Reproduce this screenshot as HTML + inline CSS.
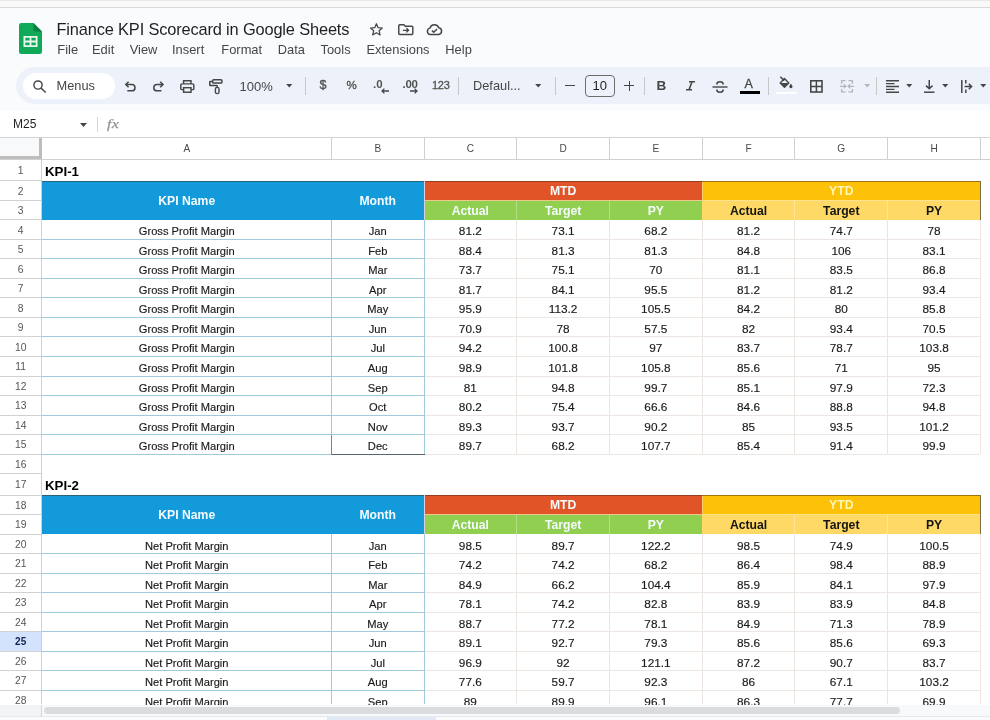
<!DOCTYPE html>
<html>
<head>
<meta charset="utf-8">
<title>Finance KPI Scorecard in Google Sheets</title>
<style>
html,body{margin:0;padding:0;}
body{width:990px;height:720px;overflow:hidden;position:relative;background:#f9fbfd;font-family:"Liberation Sans",sans-serif;color:#1f1f1f;}
#pg{position:absolute;left:0;top:0;width:990px;height:720px;overflow:hidden;will-change:transform;}
#pg div{position:absolute;box-sizing:border-box;white-space:nowrap;}
.ch{font-size:10.1px;color:#4a4a4a;display:flex;align-items:center;justify-content:center;}
.rh{font-size:10.3px;color:#555;display:flex;align-items:center;justify-content:center;padding-top:1px;}
.c{font-size:11.15px;color:#1a1a1a;-webkit-text-stroke:0.15px #1a1a1a;display:flex;align-items:center;justify-content:center;padding-top:3.5px;}
.n{font-size:11.8px;}
.hd{font-size:12.2px;font-weight:bold;display:flex;align-items:center;justify-content:center;padding-top:1px;}
.w{color:#f4fbff;}
.k{color:#141414;}
.s{font-size:12.2px;}
.ttl{font-size:13.3px;font-weight:bold;color:#000;display:flex;align-items:center;padding-top:2px;}
.t{color:#444746;}
svg{position:absolute;overflow:visible;}
</style>
</head>
<body>
<div id="pg">
<!-- top strip -->
<div style="left:0;top:0;width:990px;height:7px;background:#f8f8f8"></div>
<div style="left:0;top:0;width:990px;height:1px;background:#e9e9e9"></div>
<div style="left:0;top:7px;width:990px;height:1px;background:#d9d9d9"></div>

<!-- sheets logo -->
<svg style="left:19px;top:23px" width="23" height="31" viewBox="0 0 23 31">
  <path d="M2.5 0 H14.5 L23 8.5 V28.5 A2.5 2.5 0 0 1 20.5 31 H2.5 A2.5 2.5 0 0 1 0 28.5 V2.500 A2.5 2.5 0 0 1 2.5 0 Z" fill="#0fa958"/>
  <path d="M14.5 0 L23 8.500 H16.5 A2 2 0 0 1 14.5 6.500 Z" fill="#0b8043"/>
  <path d="M4.500 13 H18.500 V24 H4.500 Z M6.300 14.800 V17.600 H10.600 V14.800 Z M12.400 14.800 V17.600 H16.700 V14.800 Z M6.300 19.400 V22.200 H10.600 V19.400 Z M12.400 19.400 V22.200 H16.700 V19.400 Z" fill="#e9f7ee" fill-rule="evenodd"/>
</svg>

<!-- title -->
<div id="title" style="left:56.5px;top:17.2px;height:24px;line-height:24px;font-size:16.4px;color:#1f1f1f;letter-spacing:-0.16px">Finance KPI Scorecard in Google Sheets</div>

<!-- title icons -->
<svg style="left:368.800px;top:21.600px" width="14.800" height="14.800" viewBox="0 0 24 24"><path d="M12 2.800 L14.700 9.200 L21.600 9.800 L16.400 14.300 L18 21 L12 17.400 L6 21 L7.600 14.300 L2.400 9.800 L9.300 9.200 Z" fill="none" stroke="#444746" stroke-width="2" stroke-linejoin="round"/></svg>
<svg style="left:398px;top:23.600px" width="15.600" height="11.200" viewBox="0 0 16 12" preserveAspectRatio="none"><path d="M1.800 0.800 H6 L7.500 2.400 H14.200 A1 1 0 0 1 15.200 3.400 V10.200 A1 1 0 0 1 14.200 11.200 H1.800 A1 1 0 0 1 0.800 10.200 V1.800 A1 1 0 0 1 1.800 0.800 Z" fill="none" stroke="#444746" stroke-width="1.500" stroke-linejoin="round"/><path d="M5 6.800 H10.600 M8.600 4.600 L10.800 6.800 L8.600 9" fill="none" stroke="#444746" stroke-width="1.400"/></svg>
<svg style="left:425.600px;top:23.800px" width="17" height="11.300" viewBox="0 0 17 11.500" preserveAspectRatio="none"><path d="M4.300 10.700 A3.300 3.300 0 0 1 4 4.200 A4.600 4.600 0 0 1 12.800 3.900 A3.500 3.500 0 0 1 13 10.700 Z" fill="none" stroke="#444746" stroke-width="1.500" stroke-linejoin="round"/><path d="M5.900 6.700 L7.700 8.500 L11.100 5" fill="none" stroke="#444746" stroke-width="1.400"/></svg>

<!-- menu -->
<div class="t m" style="left:57.3px;top:40.8px;height:17px;line-height:17px;font-size:12.9px" id="m1">File</div>
<div class="t m" style="left:92px;top:40.8px;height:17px;line-height:17px;font-size:12.9px" id="m2">Edit</div>
<div class="t m" style="left:129.7px;top:40.8px;height:17px;line-height:17px;font-size:12.9px" id="m3">View</div>
<div class="t m" style="left:172px;top:40.8px;height:17px;line-height:17px;font-size:12.9px" id="m4">Insert</div>
<div class="t m" style="left:221.3px;top:40.8px;height:17px;line-height:17px;font-size:12.9px" id="m5">Format</div>
<div class="t m" style="left:277.8px;top:40.8px;height:17px;line-height:17px;font-size:12.9px" id="m6">Data</div>
<div class="t m" style="left:320.5px;top:40.8px;height:17px;line-height:17px;font-size:12.9px" id="m7">Tools</div>
<div class="t m" style="left:366.5px;top:40.8px;height:17px;line-height:17px;font-size:12.9px" id="m8">Extensions</div>
<div class="t m" style="left:445.3px;top:40.8px;height:17px;line-height:17px;font-size:12.9px" id="m9">Help</div>

<!-- toolbar pill -->
<div style="left:15.500px;top:67px;width:1000px;height:37px;border-radius:18.500px;background:#edf2fa"></div>
<div style="left:23px;top:72.500px;width:92px;height:26px;border-radius:13px;background:#fff"></div>
<!-- search -->
<svg style="left:33px;top:79.500px" width="13.500" height="13" viewBox="0 0 13.500 13"><circle cx="5" cy="5" r="4.100" fill="none" stroke="#444746" stroke-width="1.450"/><path d="M8 8 L12.700 12.500" stroke="#444746" stroke-width="1.600" fill="none"/></svg>
<div class="t" id="menus" style="left:56.500px;top:77px;height:18px;line-height:18px;font-size:12.800px">Menus</div>
<!-- undo -->
<svg style="left:125px;top:80.900px" width="10.800" height="10.800" viewBox="0 0 12 12"><path d="M4 0.800 L0.900 3.900 L4 7" fill="none" stroke="#444746" stroke-width="1.700"/><path d="M1.200 3.900 H7.600 A3.500 3.500 0 0 1 7.600 10.900 H2.600" fill="none" stroke="#444746" stroke-width="1.700"/></svg>
<!-- redo -->
<svg style="left:153px;top:80.900px" width="10.800" height="10.800" viewBox="0 0 12 12"><path d="M8 0.800 L11.100 3.900 L8 7" fill="none" stroke="#444746" stroke-width="1.700"/><path d="M10.800 3.900 H4.400 A3.500 3.500 0 0 0 4.400 10.900 H9.400" fill="none" stroke="#444746" stroke-width="1.700"/></svg>
<!-- print -->
<svg style="left:180.200px;top:79.600px" width="14.600" height="13" viewBox="0 0 15 13.500" preserveAspectRatio="none"><path d="M3.700 4 V0.800 H11.300 V4" fill="none" stroke="#444746" stroke-width="1.500"/><path d="M3.600 10 H1.800 A1 1 0 0 1 0.800 9 V5.400 A1.400 1.400 0 0 1 2.200 4 H12.800 A1.400 1.400 0 0 1 14.200 5.400 V9 A1 1 0 0 1 13.200 10 H11.400" fill="none" stroke="#444746" stroke-width="1.500"/><rect x="3.700" y="8" width="7.600" height="4.700" fill="none" stroke="#444746" stroke-width="1.500"/></svg>
<!-- paint format -->
<svg style="left:209px;top:79px" width="14" height="15.500" viewBox="0 0 14 15.500"><rect x="3.600" y="0.800" width="9.400" height="3.300" rx="1.200" fill="none" stroke="#444746" stroke-width="1.500"/><path d="M3.600 2.450 H1.400 A0.600 0.600 0 0 0 0.800 3.050 V6 A0.600 0.600 0 0 0 1.400 6.600 H7.600 A0.600 0.600 0 0 1 8.200 7.200 V8.400" fill="none" stroke="#444746" stroke-width="1.500"/><rect x="6.400" y="8.400" width="3.600" height="6.200" rx="1.700" fill="none" stroke="#444746" stroke-width="1.400"/></svg>
<!-- zoom -->
<div class="t" id="zoom" style="left:239.500px;top:77.500px;height:18px;line-height:18px;font-size:13px">100%</div>
<svg style="left:286px;top:84px" width="6.500" height="3.500" viewBox="0 0 7 4"><path d="M0 0 H7 L3.500 4 Z" fill="#444746"/></svg>
<div style="left:305px;top:76.500px;width:1px;height:18px;background:#c7c7c7"></div>
<!-- $ % .0 .00 123 -->
<div class="t" id="dol" style="left:319.500px;top:77px;height:17px;line-height:17px;font-size:12.500px;font-weight:normal;-webkit-text-stroke:0.35px #50534f;color:#50534f">$</div>
<div class="t" id="pct" style="left:346.500px;top:77px;height:17px;line-height:17px;font-size:11.500px;font-weight:normal;-webkit-text-stroke:0.35px #50534f;color:#50534f">%</div>
<div class="t" id="d0" style="left:373px;top:75.500px;height:16px;line-height:16px;font-size:11.500px;font-weight:bold;color:#50534f">.0</div>
<svg style="left:381px;top:88px" width="8" height="6" viewBox="0 0 8 6"><path d="M8 3 H1.200 M3.400 0.600 L1 3 L3.400 5.400" fill="none" stroke="#444746" stroke-width="1.300"/></svg>
<div class="t" id="d00" style="left:402.500px;top:75.500px;height:16px;line-height:16px;font-size:11.500px;font-weight:bold;color:#50534f;letter-spacing:-0.3px">.00</div>
<svg style="left:410px;top:88px" width="8" height="6" viewBox="0 0 8 6"><path d="M0 3 H6.800 M4.600 0.600 L7 3 L4.600 5.400" fill="none" stroke="#444746" stroke-width="1.300"/></svg>
<div class="t" id="n123" style="left:432px;top:77px;height:17px;line-height:17px;font-size:11px;color:#50534f;-webkit-text-stroke:0.3px #50534f;letter-spacing:-0.3px">123</div>
<div style="left:458px;top:76.500px;width:1px;height:18px;background:#c7c7c7"></div>
<div class="t" id="deff" style="left:473px;top:76.500px;height:18px;line-height:18px;font-size:12.800px">Defaul...</div>
<svg style="left:534.500px;top:84px" width="6.500" height="3.500" viewBox="0 0 7 4"><path d="M0 0 H7 L3.500 4 Z" fill="#444746"/></svg>
<div style="left:555px;top:76.500px;width:1px;height:18px;background:#c7c7c7"></div>
<!-- font size -->
<div style="left:565px;top:85px;width:9.800px;height:1.250px;background:#444746"></div>
<div style="left:584.500px;top:75px;width:30.500px;height:22px;border:1px solid #6b6e6c;border-radius:4px"></div>
<div class="t" id="fs" style="left:584.500px;top:77px;width:30.500px;text-align:center;height:18px;line-height:18px;font-size:13px;color:#1f1f1f">10</div>
<div style="left:624px;top:85px;width:10px;height:1.300px;background:#444746"></div>
<div style="left:628.700px;top:80.700px;width:1.300px;height:10px;background:#444746"></div>
<div style="left:644px;top:76.500px;width:1px;height:18px;background:#c7c7c7"></div>
<!-- B I S A -->
<div class="t" id="bb" style="left:656.500px;top:77px;height:18px;line-height:18px;font-size:13.500px;font-weight:bold;color:#444746">B</div>
<svg style="left:685.5px;top:81.3px" width="9" height="9.6" viewBox="0 0 9 9.6"><path d="M3 0.800 H9 M0 8.800 H6 M6 0.800 L3 8.800" fill="none" stroke="#444746" stroke-width="1.600"/></svg>
<svg style="left:711.500px;top:80.500px" width="16" height="12" viewBox="0 0 16 12"><path d="M11.200 3.400 A3.200 2.600 0 0 0 4.800 3.400" fill="none" stroke="#444746" stroke-width="1.500"/><path d="M4.800 8.400 A3.200 2.800 0 0 0 11.200 8.400" fill="none" stroke="#444746" stroke-width="1.500"/><path d="M0.500 6 H15.500" stroke="#444746" stroke-width="1.400"/></svg>
<div class="t" id="aa" style="left:744.500px;top:75.500px;height:17px;line-height:17px;font-size:12.500px;color:#444746;-webkit-text-stroke:0.3px #444746">A</div>
<div style="left:739.500px;top:91px;width:20.500px;height:3px;background:#000"></div>
<div style="left:768px;top:76.500px;width:1px;height:18px;background:#c7c7c7"></div>
<!-- fill -->
<svg style="left:779px;top:76px" width="14" height="13" viewBox="0 0 14 13"><path d="M1.300 0.700 L5.200 4.600" stroke="#444746" stroke-width="1.500" fill="none"/><path d="M5.500 2.600 L9.800 6.900 L5.500 11.200 L1.200 6.900 Z" fill="none" stroke="#444746" stroke-width="1.400" stroke-linejoin="round"/><path d="M1.200 6.900 H9.800 L5.500 11.200 Z" fill="#444746"/><path d="M11.900 7.800 C11.900 7.800 13.500 9.700 13.500 10.600 A1.600 1.600 0 0 1 10.300 10.600 C10.300 9.700 11.900 7.800 11.900 7.800 Z" fill="#444746"/></svg>
<div style="left:775.600px;top:91.500px;width:21.600px;height:2.500px;background:#fff"></div>
<!-- borders -->
<svg style="left:810.300px;top:80px" width="12.800" height="12.800" viewBox="0 0 13 13"><rect x="0.800" y="0.800" width="11.400" height="11.400" fill="none" stroke="#444746" stroke-width="1.600"/><path d="M6.500 0.800 V12.200 M0.800 6.500 H12.200" stroke="#444746" stroke-width="1.500"/></svg>
<!-- merge (disabled) -->
<svg style="left:840.300px;top:80.200px" width="14" height="12.600" viewBox="0 0 14 13" preserveAspectRatio="none"><path d="M1.600 3.800 V0.700 H5.600 M8.400 0.700 H12.400 V3.800 M1.600 9.200 V12.300 H5.600 M8.400 12.300 H12.400 V9.200" fill="none" stroke="#b3b7bd" stroke-width="1.400"/><path d="M0 6.500 H5.800 M3.700 4.300 L5.900 6.500 L3.700 8.700 M14 6.500 H8.200 M10.300 4.300 L8.100 6.500 L10.300 8.700" fill="none" stroke="#b3b7bd" stroke-width="1.300"/></svg>
<svg style="left:863.600px;top:84.200px" width="6.500" height="3.500" viewBox="0 0 7 4"><path d="M0 0 H7 L3.500 4 Z" fill="#b5b9bf"/></svg>
<div style="left:876px;top:76.500px;width:1px;height:18px;background:#c7c7c7"></div>
<!-- h-align -->
<svg style="left:886px;top:79.900px" width="13" height="13" viewBox="0 0 13 13"><path d="M0 0.800 H13 M0 3.650 H8.500 M0 6.500 H13 M0 9.350 H8.500 M0 12.200 H13" stroke="#444746" stroke-width="1.400"/></svg>
<svg style="left:906px;top:84px" width="6.500" height="3.500" viewBox="0 0 7 4"><path d="M0 0 H7 L3.500 4 Z" fill="#444746"/></svg>
<!-- v-align -->
<svg style="left:924.300px;top:79.800px" width="10.500" height="13" viewBox="0 0 10.500 13"><path d="M5.250 0 V8.600 M2 5.600 L5.250 8.800 L8.500 5.600" fill="none" stroke="#444746" stroke-width="1.500"/><path d="M0 12.200 H10.500" stroke="#444746" stroke-width="1.500"/></svg>
<svg style="left:942.400px;top:84px" width="6.500" height="3.500" viewBox="0 0 7 4"><path d="M0 0 H7 L3.500 4 Z" fill="#444746"/></svg>
<!-- wrap -->
<svg style="left:961px;top:80px" width="11.500" height="13" viewBox="0 0 11.500 13"><path d="M0.800 0 V13 M4.800 0 V3.600 M4.800 9.400 V13" stroke="#444746" stroke-width="1.500"/><path d="M3.600 6.500 H10.400 M7.800 3.800 L10.600 6.500 L7.800 9.200" fill="none" stroke="#444746" stroke-width="1.500"/></svg>
<svg style="left:979.600px;top:84px" width="6.500" height="3.500" viewBox="0 0 7 4"><path d="M0 0 H7 L3.500 4 Z" fill="#444746"/></svg>


<!-- formula bar -->
<div style="left:0;top:110.500px;width:990px;height:26.500px;background:#fff"></div>
<div id="cellref" style="left:13px;top:115.8px;height:17px;line-height:17px;font-size:12px;color:#1f1f1f">M25</div>
<svg style="left:79.500px;top:122.500px" width="7" height="4" viewBox="0 0 7 4"><path d="M0 0 H7 L3.500 4 Z" fill="#444746"/></svg>
<div style="left:97px;top:117px;width:1px;height:15px;background:#d5d5d5"></div>
<div id="fx" style="left:106.800px;top:114.500px;height:19px;line-height:19px;font-size:12.6px;color:#959595;font-family:'Liberation Serif',serif;font-style:italic;letter-spacing:0.3px;transform:scaleX(1.28);transform-origin:0 0;-webkit-text-stroke:0.25px #959595">fx</div>

<div style="left:0.00px;top:138.00px;width:990.00px;height:566.50px;background:#fff"></div>
<div style="left:0.00px;top:180.30px;width:42.00px;height:1.00px;background:#d2d2d2"></div>
<div style="left:0.00px;top:199.82px;width:42.00px;height:1.00px;background:#d2d2d2"></div>
<div style="left:0.00px;top:219.34px;width:42.00px;height:1.00px;background:#d2d2d2"></div>
<div style="left:0.00px;top:238.86px;width:42.00px;height:1.00px;background:#d2d2d2"></div>
<div style="left:0.00px;top:258.38px;width:42.00px;height:1.00px;background:#d2d2d2"></div>
<div style="left:0.00px;top:277.90px;width:42.00px;height:1.00px;background:#d2d2d2"></div>
<div style="left:0.00px;top:297.42px;width:42.00px;height:1.00px;background:#d2d2d2"></div>
<div style="left:0.00px;top:316.94px;width:42.00px;height:1.00px;background:#d2d2d2"></div>
<div style="left:0.00px;top:336.46px;width:42.00px;height:1.00px;background:#d2d2d2"></div>
<div style="left:0.00px;top:355.98px;width:42.00px;height:1.00px;background:#d2d2d2"></div>
<div style="left:0.00px;top:375.50px;width:42.00px;height:1.00px;background:#d2d2d2"></div>
<div style="left:0.00px;top:395.02px;width:42.00px;height:1.00px;background:#d2d2d2"></div>
<div style="left:0.00px;top:414.54px;width:42.00px;height:1.00px;background:#d2d2d2"></div>
<div style="left:0.00px;top:434.06px;width:42.00px;height:1.00px;background:#d2d2d2"></div>
<div style="left:0.00px;top:453.58px;width:42.00px;height:1.00px;background:#d2d2d2"></div>
<div style="left:0.00px;top:473.10px;width:42.00px;height:1.00px;background:#d2d2d2"></div>
<div style="left:0.00px;top:494.50px;width:42.00px;height:1.00px;background:#d2d2d2"></div>
<div style="left:0.00px;top:514.02px;width:42.00px;height:1.00px;background:#d2d2d2"></div>
<div style="left:0.00px;top:533.54px;width:42.00px;height:1.00px;background:#d2d2d2"></div>
<div style="left:0.00px;top:553.06px;width:42.00px;height:1.00px;background:#d2d2d2"></div>
<div style="left:0.00px;top:572.58px;width:42.00px;height:1.00px;background:#d2d2d2"></div>
<div style="left:0.00px;top:592.10px;width:42.00px;height:1.00px;background:#d2d2d2"></div>
<div style="left:0.00px;top:611.62px;width:42.00px;height:1.00px;background:#d2d2d2"></div>
<div style="left:0.00px;top:631.14px;width:42.00px;height:1.00px;background:#d2d2d2"></div>
<div style="left:0.00px;top:650.66px;width:42.00px;height:1.00px;background:#d2d2d2"></div>
<div style="left:0.00px;top:670.18px;width:42.00px;height:1.00px;background:#d2d2d2"></div>
<div style="left:0.00px;top:689.70px;width:42.00px;height:1.00px;background:#d2d2d2"></div>
<div style="left:0.00px;top:137.00px;width:990.00px;height:1.00px;background:#d4d4d4"></div>
<div style="left:0.00px;top:158.90px;width:990.00px;height:1.00px;background:#d0d0d0"></div>
<div class="ch" style="left:42.00px;top:138.00px;width:289.50px;height:21.00px;">A</div>
<div style="left:331.00px;top:138.00px;width:1.00px;height:21.00px;background:#d0d0d0"></div>
<div class="ch" style="left:331.50px;top:138.00px;width:92.50px;height:21.00px;">B</div>
<div style="left:423.50px;top:138.00px;width:1.00px;height:21.00px;background:#d0d0d0"></div>
<div class="ch" style="left:424.00px;top:138.00px;width:92.70px;height:21.00px;">C</div>
<div style="left:516.20px;top:138.00px;width:1.00px;height:21.00px;background:#d0d0d0"></div>
<div class="ch" style="left:516.70px;top:138.00px;width:92.80px;height:21.00px;">D</div>
<div style="left:609.00px;top:138.00px;width:1.00px;height:21.00px;background:#d0d0d0"></div>
<div class="ch" style="left:609.50px;top:138.00px;width:92.70px;height:21.00px;">E</div>
<div style="left:701.70px;top:138.00px;width:1.00px;height:21.00px;background:#d0d0d0"></div>
<div class="ch" style="left:702.20px;top:138.00px;width:92.70px;height:21.00px;">F</div>
<div style="left:794.40px;top:138.00px;width:1.00px;height:21.00px;background:#d0d0d0"></div>
<div class="ch" style="left:794.90px;top:138.00px;width:92.80px;height:21.00px;">G</div>
<div style="left:887.20px;top:138.00px;width:1.00px;height:21.00px;background:#d0d0d0"></div>
<div class="ch" style="left:887.70px;top:138.00px;width:92.70px;height:21.00px;">H</div>
<div style="left:979.90px;top:138.00px;width:1.00px;height:21.00px;background:#d0d0d0"></div>
<div style="left:0.00px;top:138.00px;width:38.50px;height:17.50px;background:#f8f9fa"></div>
<div style="left:38.50px;top:138.00px;width:3.80px;height:21.40px;background:#bdbdbd"></div>
<div style="left:0.00px;top:155.50px;width:42.30px;height:3.90px;background:#bdbdbd"></div>
<div style="left:41.30px;top:159.40px;width:1.00px;height:545.10px;background:#d0d0d0"></div>
<div class="rh" style="left:0.00px;top:159.40px;width:41.30px;height:21.40px;">1</div>
<div class="rh" style="left:0.00px;top:180.80px;width:41.30px;height:19.52px;">2</div>
<div class="rh" style="left:0.00px;top:200.32px;width:41.30px;height:19.52px;">3</div>
<div class="rh" style="left:0.00px;top:219.84px;width:41.30px;height:19.52px;">4</div>
<div class="rh" style="left:0.00px;top:239.36px;width:41.30px;height:19.52px;">5</div>
<div class="rh" style="left:0.00px;top:258.88px;width:41.30px;height:19.52px;">6</div>
<div class="rh" style="left:0.00px;top:278.40px;width:41.30px;height:19.52px;">7</div>
<div class="rh" style="left:0.00px;top:297.92px;width:41.30px;height:19.52px;">8</div>
<div class="rh" style="left:0.00px;top:317.44px;width:41.30px;height:19.52px;">9</div>
<div class="rh" style="left:0.00px;top:336.96px;width:41.30px;height:19.52px;">10</div>
<div class="rh" style="left:0.00px;top:356.48px;width:41.30px;height:19.52px;">11</div>
<div class="rh" style="left:0.00px;top:376.00px;width:41.30px;height:19.52px;">12</div>
<div class="rh" style="left:0.00px;top:395.52px;width:41.30px;height:19.52px;">13</div>
<div class="rh" style="left:0.00px;top:415.04px;width:41.30px;height:19.52px;">14</div>
<div class="rh" style="left:0.00px;top:434.56px;width:41.30px;height:19.52px;">15</div>
<div class="rh" style="left:0.00px;top:454.08px;width:41.30px;height:19.52px;">16</div>
<div class="rh" style="left:0.00px;top:473.60px;width:41.30px;height:21.40px;">17</div>
<div class="rh" style="left:0.00px;top:495.00px;width:41.30px;height:19.52px;">18</div>
<div class="rh" style="left:0.00px;top:514.52px;width:41.30px;height:19.52px;">19</div>
<div class="rh" style="left:0.00px;top:534.04px;width:41.30px;height:19.52px;">20</div>
<div class="rh" style="left:0.00px;top:553.56px;width:41.30px;height:19.52px;">21</div>
<div class="rh" style="left:0.00px;top:573.08px;width:41.30px;height:19.52px;">22</div>
<div class="rh" style="left:0.00px;top:592.60px;width:41.30px;height:19.52px;">23</div>
<div class="rh" style="left:0.00px;top:612.12px;width:41.30px;height:19.52px;">24</div>
<div style="left:0.00px;top:632.14px;width:41.30px;height:18.52px;background:#d3e3fd"></div>
<div class="rh" style="left:0.00px;top:631.64px;width:41.30px;height:19.52px;color:#0e2452;font-weight:bold;font-size:10px">25</div>
<div class="rh" style="left:0.00px;top:651.16px;width:41.30px;height:19.52px;">26</div>
<div class="rh" style="left:0.00px;top:670.68px;width:41.30px;height:19.52px;">27</div>
<div class="rh" style="left:0.00px;top:690.20px;width:41.30px;height:19.52px;">28</div>
<div class="ttl" style="left:45.00px;top:159.40px;width:379.00px;height:21.40px;">KPI-1</div>
<div style="left:42.00px;top:180.80px;width:382.00px;height:39.04px;background:#139adb"></div>
<div class="hd w" style="left:42.00px;top:180.80px;width:289.50px;height:39.04px;">KPI Name</div>
<div class="hd w" style="left:331.50px;top:180.80px;width:92.50px;height:39.04px;">Month</div>
<div class="hd w s" style="left:424.00px;top:180.80px;width:278.20px;height:19.52px;background:#e15427">MTD</div>
<div class="hd w s" style="left:702.20px;top:180.80px;width:278.20px;height:19.52px;background:#fdc107;color:#fff7b8">YTD</div>
<div class="hd w" style="left:424.00px;top:200.32px;width:92.70px;height:19.52px;background:#91cf50">Actual</div>
<div class="hd k" style="left:702.20px;top:200.32px;width:92.70px;height:19.52px;background:#ffd965">Actual</div>
<div class="hd w" style="left:516.70px;top:200.32px;width:92.80px;height:19.52px;background:#91cf50">Target</div>
<div class="hd k" style="left:794.90px;top:200.32px;width:92.80px;height:19.52px;background:#ffd965">Target</div>
<div class="hd w" style="left:609.50px;top:200.32px;width:92.70px;height:19.52px;background:#91cf50">PY</div>
<div class="hd k" style="left:887.70px;top:200.32px;width:92.70px;height:19.52px;background:#ffd965">PY</div>
<div style="left:516.20px;top:200.32px;width:1.00px;height:19.52px;background:#b4dd86"></div>
<div style="left:609.00px;top:200.32px;width:1.00px;height:19.52px;background:#b4dd86"></div>
<div style="left:794.40px;top:200.32px;width:1.00px;height:19.52px;background:#ffe596"></div>
<div style="left:887.20px;top:200.32px;width:1.00px;height:19.52px;background:#ffe596"></div>
<div style="left:424.00px;top:199.82px;width:278.20px;height:1.00px;background:#ecc98a"></div>
<div style="left:702.20px;top:199.82px;width:278.20px;height:1.00px;background:#ffe28a"></div>
<div style="left:42.00px;top:180.50px;width:938.90px;height:1.20px;background:rgba(70,40,30,0.5)"></div>
<div style="left:423.50px;top:180.80px;width:1.00px;height:39.04px;background:#d9cfe0"></div>
<div style="left:701.70px;top:181.70px;width:1.00px;height:18.62px;background:#ffcf6a"></div>
<div style="left:979.80px;top:180.80px;width:1.20px;height:39.54px;background:#7d6e45"></div>
<div class="c" style="left:42.00px;top:219.84px;width:289.50px;height:19.52px;">Gross Profit Margin</div>
<div class="c" style="left:331.50px;top:219.84px;width:92.50px;height:19.52px;">Jan</div>
<div class="c n" style="left:424.00px;top:219.84px;width:92.70px;height:19.52px;">81.2</div>
<div class="c n" style="left:516.70px;top:219.84px;width:92.80px;height:19.52px;">73.1</div>
<div class="c n" style="left:609.50px;top:219.84px;width:92.70px;height:19.52px;">68.2</div>
<div class="c n" style="left:702.20px;top:219.84px;width:92.70px;height:19.52px;">81.2</div>
<div class="c n" style="left:794.90px;top:219.84px;width:92.80px;height:19.52px;">74.7</div>
<div class="c n" style="left:887.70px;top:219.84px;width:92.70px;height:19.52px;">78</div>
<div style="left:42.00px;top:238.86px;width:382.00px;height:1.00px;background:#9dcbda"></div>
<div style="left:424.00px;top:238.86px;width:556.40px;height:1.00px;background:#ece5e2"></div>
<div class="c" style="left:42.00px;top:239.36px;width:289.50px;height:19.52px;">Gross Profit Margin</div>
<div class="c" style="left:331.50px;top:239.36px;width:92.50px;height:19.52px;">Feb</div>
<div class="c n" style="left:424.00px;top:239.36px;width:92.70px;height:19.52px;">88.4</div>
<div class="c n" style="left:516.70px;top:239.36px;width:92.80px;height:19.52px;">81.3</div>
<div class="c n" style="left:609.50px;top:239.36px;width:92.70px;height:19.52px;">81.3</div>
<div class="c n" style="left:702.20px;top:239.36px;width:92.70px;height:19.52px;">84.8</div>
<div class="c n" style="left:794.90px;top:239.36px;width:92.80px;height:19.52px;">106</div>
<div class="c n" style="left:887.70px;top:239.36px;width:92.70px;height:19.52px;">83.1</div>
<div style="left:42.00px;top:258.38px;width:382.00px;height:1.00px;background:#9dcbda"></div>
<div style="left:424.00px;top:258.38px;width:556.40px;height:1.00px;background:#ece5e2"></div>
<div class="c" style="left:42.00px;top:258.88px;width:289.50px;height:19.52px;">Gross Profit Margin</div>
<div class="c" style="left:331.50px;top:258.88px;width:92.50px;height:19.52px;">Mar</div>
<div class="c n" style="left:424.00px;top:258.88px;width:92.70px;height:19.52px;">73.7</div>
<div class="c n" style="left:516.70px;top:258.88px;width:92.80px;height:19.52px;">75.1</div>
<div class="c n" style="left:609.50px;top:258.88px;width:92.70px;height:19.52px;">70</div>
<div class="c n" style="left:702.20px;top:258.88px;width:92.70px;height:19.52px;">81.1</div>
<div class="c n" style="left:794.90px;top:258.88px;width:92.80px;height:19.52px;">83.5</div>
<div class="c n" style="left:887.70px;top:258.88px;width:92.70px;height:19.52px;">86.8</div>
<div style="left:42.00px;top:277.90px;width:382.00px;height:1.00px;background:#9dcbda"></div>
<div style="left:424.00px;top:277.90px;width:556.40px;height:1.00px;background:#ece5e2"></div>
<div class="c" style="left:42.00px;top:278.40px;width:289.50px;height:19.52px;">Gross Profit Margin</div>
<div class="c" style="left:331.50px;top:278.40px;width:92.50px;height:19.52px;">Apr</div>
<div class="c n" style="left:424.00px;top:278.40px;width:92.70px;height:19.52px;">81.7</div>
<div class="c n" style="left:516.70px;top:278.40px;width:92.80px;height:19.52px;">84.1</div>
<div class="c n" style="left:609.50px;top:278.40px;width:92.70px;height:19.52px;">95.5</div>
<div class="c n" style="left:702.20px;top:278.40px;width:92.70px;height:19.52px;">81.2</div>
<div class="c n" style="left:794.90px;top:278.40px;width:92.80px;height:19.52px;">81.2</div>
<div class="c n" style="left:887.70px;top:278.40px;width:92.70px;height:19.52px;">93.4</div>
<div style="left:42.00px;top:297.42px;width:382.00px;height:1.00px;background:#9dcbda"></div>
<div style="left:424.00px;top:297.42px;width:556.40px;height:1.00px;background:#ece5e2"></div>
<div class="c" style="left:42.00px;top:297.92px;width:289.50px;height:19.52px;">Gross Profit Margin</div>
<div class="c" style="left:331.50px;top:297.92px;width:92.50px;height:19.52px;">May</div>
<div class="c n" style="left:424.00px;top:297.92px;width:92.70px;height:19.52px;">95.9</div>
<div class="c n" style="left:516.70px;top:297.92px;width:92.80px;height:19.52px;">113.2</div>
<div class="c n" style="left:609.50px;top:297.92px;width:92.70px;height:19.52px;">105.5</div>
<div class="c n" style="left:702.20px;top:297.92px;width:92.70px;height:19.52px;">84.2</div>
<div class="c n" style="left:794.90px;top:297.92px;width:92.80px;height:19.52px;">80</div>
<div class="c n" style="left:887.70px;top:297.92px;width:92.70px;height:19.52px;">85.8</div>
<div style="left:42.00px;top:316.94px;width:382.00px;height:1.00px;background:#9dcbda"></div>
<div style="left:424.00px;top:316.94px;width:556.40px;height:1.00px;background:#ece5e2"></div>
<div class="c" style="left:42.00px;top:317.44px;width:289.50px;height:19.52px;">Gross Profit Margin</div>
<div class="c" style="left:331.50px;top:317.44px;width:92.50px;height:19.52px;">Jun</div>
<div class="c n" style="left:424.00px;top:317.44px;width:92.70px;height:19.52px;">70.9</div>
<div class="c n" style="left:516.70px;top:317.44px;width:92.80px;height:19.52px;">78</div>
<div class="c n" style="left:609.50px;top:317.44px;width:92.70px;height:19.52px;">57.5</div>
<div class="c n" style="left:702.20px;top:317.44px;width:92.70px;height:19.52px;">82</div>
<div class="c n" style="left:794.90px;top:317.44px;width:92.80px;height:19.52px;">93.4</div>
<div class="c n" style="left:887.70px;top:317.44px;width:92.70px;height:19.52px;">70.5</div>
<div style="left:42.00px;top:336.46px;width:382.00px;height:1.00px;background:#9dcbda"></div>
<div style="left:424.00px;top:336.46px;width:556.40px;height:1.00px;background:#ece5e2"></div>
<div class="c" style="left:42.00px;top:336.96px;width:289.50px;height:19.52px;">Gross Profit Margin</div>
<div class="c" style="left:331.50px;top:336.96px;width:92.50px;height:19.52px;">Jul</div>
<div class="c n" style="left:424.00px;top:336.96px;width:92.70px;height:19.52px;">94.2</div>
<div class="c n" style="left:516.70px;top:336.96px;width:92.80px;height:19.52px;">100.8</div>
<div class="c n" style="left:609.50px;top:336.96px;width:92.70px;height:19.52px;">97</div>
<div class="c n" style="left:702.20px;top:336.96px;width:92.70px;height:19.52px;">83.7</div>
<div class="c n" style="left:794.90px;top:336.96px;width:92.80px;height:19.52px;">78.7</div>
<div class="c n" style="left:887.70px;top:336.96px;width:92.70px;height:19.52px;">103.8</div>
<div style="left:42.00px;top:355.98px;width:382.00px;height:1.00px;background:#9dcbda"></div>
<div style="left:424.00px;top:355.98px;width:556.40px;height:1.00px;background:#ece5e2"></div>
<div class="c" style="left:42.00px;top:356.48px;width:289.50px;height:19.52px;">Gross Profit Margin</div>
<div class="c" style="left:331.50px;top:356.48px;width:92.50px;height:19.52px;">Aug</div>
<div class="c n" style="left:424.00px;top:356.48px;width:92.70px;height:19.52px;">98.9</div>
<div class="c n" style="left:516.70px;top:356.48px;width:92.80px;height:19.52px;">101.8</div>
<div class="c n" style="left:609.50px;top:356.48px;width:92.70px;height:19.52px;">105.8</div>
<div class="c n" style="left:702.20px;top:356.48px;width:92.70px;height:19.52px;">85.6</div>
<div class="c n" style="left:794.90px;top:356.48px;width:92.80px;height:19.52px;">71</div>
<div class="c n" style="left:887.70px;top:356.48px;width:92.70px;height:19.52px;">95</div>
<div style="left:42.00px;top:375.50px;width:382.00px;height:1.00px;background:#9dcbda"></div>
<div style="left:424.00px;top:375.50px;width:556.40px;height:1.00px;background:#ece5e2"></div>
<div class="c" style="left:42.00px;top:376.00px;width:289.50px;height:19.52px;">Gross Profit Margin</div>
<div class="c" style="left:331.50px;top:376.00px;width:92.50px;height:19.52px;">Sep</div>
<div class="c n" style="left:424.00px;top:376.00px;width:92.70px;height:19.52px;">81</div>
<div class="c n" style="left:516.70px;top:376.00px;width:92.80px;height:19.52px;">94.8</div>
<div class="c n" style="left:609.50px;top:376.00px;width:92.70px;height:19.52px;">99.7</div>
<div class="c n" style="left:702.20px;top:376.00px;width:92.70px;height:19.52px;">85.1</div>
<div class="c n" style="left:794.90px;top:376.00px;width:92.80px;height:19.52px;">97.9</div>
<div class="c n" style="left:887.70px;top:376.00px;width:92.70px;height:19.52px;">72.3</div>
<div style="left:42.00px;top:395.02px;width:382.00px;height:1.00px;background:#9dcbda"></div>
<div style="left:424.00px;top:395.02px;width:556.40px;height:1.00px;background:#ece5e2"></div>
<div class="c" style="left:42.00px;top:395.52px;width:289.50px;height:19.52px;">Gross Profit Margin</div>
<div class="c" style="left:331.50px;top:395.52px;width:92.50px;height:19.52px;">Oct</div>
<div class="c n" style="left:424.00px;top:395.52px;width:92.70px;height:19.52px;">80.2</div>
<div class="c n" style="left:516.70px;top:395.52px;width:92.80px;height:19.52px;">75.4</div>
<div class="c n" style="left:609.50px;top:395.52px;width:92.70px;height:19.52px;">66.6</div>
<div class="c n" style="left:702.20px;top:395.52px;width:92.70px;height:19.52px;">84.6</div>
<div class="c n" style="left:794.90px;top:395.52px;width:92.80px;height:19.52px;">88.8</div>
<div class="c n" style="left:887.70px;top:395.52px;width:92.70px;height:19.52px;">94.8</div>
<div style="left:42.00px;top:414.54px;width:382.00px;height:1.00px;background:#9dcbda"></div>
<div style="left:424.00px;top:414.54px;width:556.40px;height:1.00px;background:#ece5e2"></div>
<div class="c" style="left:42.00px;top:415.04px;width:289.50px;height:19.52px;">Gross Profit Margin</div>
<div class="c" style="left:331.50px;top:415.04px;width:92.50px;height:19.52px;">Nov</div>
<div class="c n" style="left:424.00px;top:415.04px;width:92.70px;height:19.52px;">89.3</div>
<div class="c n" style="left:516.70px;top:415.04px;width:92.80px;height:19.52px;">93.7</div>
<div class="c n" style="left:609.50px;top:415.04px;width:92.70px;height:19.52px;">90.2</div>
<div class="c n" style="left:702.20px;top:415.04px;width:92.70px;height:19.52px;">85</div>
<div class="c n" style="left:794.90px;top:415.04px;width:92.80px;height:19.52px;">93.5</div>
<div class="c n" style="left:887.70px;top:415.04px;width:92.70px;height:19.52px;">101.2</div>
<div style="left:42.00px;top:434.06px;width:382.00px;height:1.00px;background:#9dcbda"></div>
<div style="left:424.00px;top:434.06px;width:556.40px;height:1.00px;background:#ece5e2"></div>
<div class="c" style="left:42.00px;top:434.56px;width:289.50px;height:19.52px;">Gross Profit Margin</div>
<div class="c" style="left:331.50px;top:434.56px;width:92.50px;height:19.52px;">Dec</div>
<div class="c n" style="left:424.00px;top:434.56px;width:92.70px;height:19.52px;">89.7</div>
<div class="c n" style="left:516.70px;top:434.56px;width:92.80px;height:19.52px;">68.2</div>
<div class="c n" style="left:609.50px;top:434.56px;width:92.70px;height:19.52px;">107.7</div>
<div class="c n" style="left:702.20px;top:434.56px;width:92.70px;height:19.52px;">85.4</div>
<div class="c n" style="left:794.90px;top:434.56px;width:92.80px;height:19.52px;">91.4</div>
<div class="c n" style="left:887.70px;top:434.56px;width:92.70px;height:19.52px;">99.9</div>
<div style="left:42.00px;top:453.58px;width:382.00px;height:1.00px;background:#9dcbda"></div>
<div style="left:424.00px;top:453.58px;width:556.40px;height:1.00px;background:#ece5e2"></div>
<div style="left:331.00px;top:219.84px;width:1.00px;height:234.24px;background:#9dcbda"></div>
<div style="left:423.50px;top:219.84px;width:1.00px;height:234.24px;background:#9dcbda"></div>
<div style="left:516.20px;top:219.84px;width:1.00px;height:234.24px;background:#ece5e2"></div>
<div style="left:609.00px;top:219.84px;width:1.00px;height:234.24px;background:#ece5e2"></div>
<div style="left:701.70px;top:219.84px;width:1.00px;height:234.24px;background:#ece5e2"></div>
<div style="left:794.40px;top:219.84px;width:1.00px;height:234.24px;background:#ece5e2"></div>
<div style="left:887.20px;top:219.84px;width:1.00px;height:234.24px;background:#ece5e2"></div>
<div style="left:979.90px;top:219.84px;width:1.00px;height:234.24px;background:#ece5e2"></div>
<div style="left:331.00px;top:453.58px;width:93.50px;height:1.00px;background:#5a666c"></div>
<div style="left:331.00px;top:434.56px;width:1.00px;height:20.02px;background:#5d8ea6"></div>
<div class="ttl" style="left:45.00px;top:473.60px;width:379.00px;height:21.40px;">KPI-2</div>
<div style="left:42.00px;top:495.00px;width:382.00px;height:39.04px;background:#139adb"></div>
<div class="hd w" style="left:42.00px;top:495.00px;width:289.50px;height:39.04px;">KPI Name</div>
<div class="hd w" style="left:331.50px;top:495.00px;width:92.50px;height:39.04px;">Month</div>
<div class="hd w s" style="left:424.00px;top:495.00px;width:278.20px;height:19.52px;background:#e15427">MTD</div>
<div class="hd w s" style="left:702.20px;top:495.00px;width:278.20px;height:19.52px;background:#fdc107;color:#fff7b8">YTD</div>
<div class="hd w" style="left:424.00px;top:514.52px;width:92.70px;height:19.52px;background:#91cf50">Actual</div>
<div class="hd k" style="left:702.20px;top:514.52px;width:92.70px;height:19.52px;background:#ffd965">Actual</div>
<div class="hd w" style="left:516.70px;top:514.52px;width:92.80px;height:19.52px;background:#91cf50">Target</div>
<div class="hd k" style="left:794.90px;top:514.52px;width:92.80px;height:19.52px;background:#ffd965">Target</div>
<div class="hd w" style="left:609.50px;top:514.52px;width:92.70px;height:19.52px;background:#91cf50">PY</div>
<div class="hd k" style="left:887.70px;top:514.52px;width:92.70px;height:19.52px;background:#ffd965">PY</div>
<div style="left:516.20px;top:514.52px;width:1.00px;height:19.52px;background:#b4dd86"></div>
<div style="left:609.00px;top:514.52px;width:1.00px;height:19.52px;background:#b4dd86"></div>
<div style="left:794.40px;top:514.52px;width:1.00px;height:19.52px;background:#ffe596"></div>
<div style="left:887.20px;top:514.52px;width:1.00px;height:19.52px;background:#ffe596"></div>
<div style="left:424.00px;top:514.02px;width:278.20px;height:1.00px;background:#ecc98a"></div>
<div style="left:702.20px;top:514.02px;width:278.20px;height:1.00px;background:#ffe28a"></div>
<div style="left:42.00px;top:494.70px;width:938.90px;height:1.20px;background:rgba(70,40,30,0.5)"></div>
<div style="left:423.50px;top:495.00px;width:1.00px;height:39.04px;background:#d9cfe0"></div>
<div style="left:701.70px;top:495.90px;width:1.00px;height:18.62px;background:#ffcf6a"></div>
<div style="left:979.80px;top:495.00px;width:1.20px;height:39.54px;background:#7d6e45"></div>
<div class="c" style="left:42.00px;top:534.04px;width:289.50px;height:19.52px;">Net Profit Margin</div>
<div class="c" style="left:331.50px;top:534.04px;width:92.50px;height:19.52px;">Jan</div>
<div class="c n" style="left:424.00px;top:534.04px;width:92.70px;height:19.52px;">98.5</div>
<div class="c n" style="left:516.70px;top:534.04px;width:92.80px;height:19.52px;">89.7</div>
<div class="c n" style="left:609.50px;top:534.04px;width:92.70px;height:19.52px;">122.2</div>
<div class="c n" style="left:702.20px;top:534.04px;width:92.70px;height:19.52px;">98.5</div>
<div class="c n" style="left:794.90px;top:534.04px;width:92.80px;height:19.52px;">74.9</div>
<div class="c n" style="left:887.70px;top:534.04px;width:92.70px;height:19.52px;">100.5</div>
<div style="left:42.00px;top:553.06px;width:382.00px;height:1.00px;background:#9dcbda"></div>
<div style="left:424.00px;top:553.06px;width:556.40px;height:1.00px;background:#ece5e2"></div>
<div class="c" style="left:42.00px;top:553.56px;width:289.50px;height:19.52px;">Net Profit Margin</div>
<div class="c" style="left:331.50px;top:553.56px;width:92.50px;height:19.52px;">Feb</div>
<div class="c n" style="left:424.00px;top:553.56px;width:92.70px;height:19.52px;">74.2</div>
<div class="c n" style="left:516.70px;top:553.56px;width:92.80px;height:19.52px;">74.2</div>
<div class="c n" style="left:609.50px;top:553.56px;width:92.70px;height:19.52px;">68.2</div>
<div class="c n" style="left:702.20px;top:553.56px;width:92.70px;height:19.52px;">86.4</div>
<div class="c n" style="left:794.90px;top:553.56px;width:92.80px;height:19.52px;">98.4</div>
<div class="c n" style="left:887.70px;top:553.56px;width:92.70px;height:19.52px;">88.9</div>
<div style="left:42.00px;top:572.58px;width:382.00px;height:1.00px;background:#9dcbda"></div>
<div style="left:424.00px;top:572.58px;width:556.40px;height:1.00px;background:#ece5e2"></div>
<div class="c" style="left:42.00px;top:573.08px;width:289.50px;height:19.52px;">Net Profit Margin</div>
<div class="c" style="left:331.50px;top:573.08px;width:92.50px;height:19.52px;">Mar</div>
<div class="c n" style="left:424.00px;top:573.08px;width:92.70px;height:19.52px;">84.9</div>
<div class="c n" style="left:516.70px;top:573.08px;width:92.80px;height:19.52px;">66.2</div>
<div class="c n" style="left:609.50px;top:573.08px;width:92.70px;height:19.52px;">104.4</div>
<div class="c n" style="left:702.20px;top:573.08px;width:92.70px;height:19.52px;">85.9</div>
<div class="c n" style="left:794.90px;top:573.08px;width:92.80px;height:19.52px;">84.1</div>
<div class="c n" style="left:887.70px;top:573.08px;width:92.70px;height:19.52px;">97.9</div>
<div style="left:42.00px;top:592.10px;width:382.00px;height:1.00px;background:#9dcbda"></div>
<div style="left:424.00px;top:592.10px;width:556.40px;height:1.00px;background:#ece5e2"></div>
<div class="c" style="left:42.00px;top:592.60px;width:289.50px;height:19.52px;">Net Profit Margin</div>
<div class="c" style="left:331.50px;top:592.60px;width:92.50px;height:19.52px;">Apr</div>
<div class="c n" style="left:424.00px;top:592.60px;width:92.70px;height:19.52px;">78.1</div>
<div class="c n" style="left:516.70px;top:592.60px;width:92.80px;height:19.52px;">74.2</div>
<div class="c n" style="left:609.50px;top:592.60px;width:92.70px;height:19.52px;">82.8</div>
<div class="c n" style="left:702.20px;top:592.60px;width:92.70px;height:19.52px;">83.9</div>
<div class="c n" style="left:794.90px;top:592.60px;width:92.80px;height:19.52px;">83.9</div>
<div class="c n" style="left:887.70px;top:592.60px;width:92.70px;height:19.52px;">84.8</div>
<div style="left:42.00px;top:611.62px;width:382.00px;height:1.00px;background:#9dcbda"></div>
<div style="left:424.00px;top:611.62px;width:556.40px;height:1.00px;background:#ece5e2"></div>
<div class="c" style="left:42.00px;top:612.12px;width:289.50px;height:19.52px;">Net Profit Margin</div>
<div class="c" style="left:331.50px;top:612.12px;width:92.50px;height:19.52px;">May</div>
<div class="c n" style="left:424.00px;top:612.12px;width:92.70px;height:19.52px;">88.7</div>
<div class="c n" style="left:516.70px;top:612.12px;width:92.80px;height:19.52px;">77.2</div>
<div class="c n" style="left:609.50px;top:612.12px;width:92.70px;height:19.52px;">78.1</div>
<div class="c n" style="left:702.20px;top:612.12px;width:92.70px;height:19.52px;">84.9</div>
<div class="c n" style="left:794.90px;top:612.12px;width:92.80px;height:19.52px;">71.3</div>
<div class="c n" style="left:887.70px;top:612.12px;width:92.70px;height:19.52px;">78.9</div>
<div style="left:42.00px;top:631.14px;width:382.00px;height:1.00px;background:#9dcbda"></div>
<div style="left:424.00px;top:631.14px;width:556.40px;height:1.00px;background:#ece5e2"></div>
<div class="c" style="left:42.00px;top:631.64px;width:289.50px;height:19.52px;">Net Profit Margin</div>
<div class="c" style="left:331.50px;top:631.64px;width:92.50px;height:19.52px;">Jun</div>
<div class="c n" style="left:424.00px;top:631.64px;width:92.70px;height:19.52px;">89.1</div>
<div class="c n" style="left:516.70px;top:631.64px;width:92.80px;height:19.52px;">92.7</div>
<div class="c n" style="left:609.50px;top:631.64px;width:92.70px;height:19.52px;">79.3</div>
<div class="c n" style="left:702.20px;top:631.64px;width:92.70px;height:19.52px;">85.6</div>
<div class="c n" style="left:794.90px;top:631.64px;width:92.80px;height:19.52px;">85.6</div>
<div class="c n" style="left:887.70px;top:631.64px;width:92.70px;height:19.52px;">69.3</div>
<div style="left:42.00px;top:650.66px;width:382.00px;height:1.00px;background:#9dcbda"></div>
<div style="left:424.00px;top:650.66px;width:556.40px;height:1.00px;background:#ece5e2"></div>
<div class="c" style="left:42.00px;top:651.16px;width:289.50px;height:19.52px;">Net Profit Margin</div>
<div class="c" style="left:331.50px;top:651.16px;width:92.50px;height:19.52px;">Jul</div>
<div class="c n" style="left:424.00px;top:651.16px;width:92.70px;height:19.52px;">96.9</div>
<div class="c n" style="left:516.70px;top:651.16px;width:92.80px;height:19.52px;">92</div>
<div class="c n" style="left:609.50px;top:651.16px;width:92.70px;height:19.52px;">121.1</div>
<div class="c n" style="left:702.20px;top:651.16px;width:92.70px;height:19.52px;">87.2</div>
<div class="c n" style="left:794.90px;top:651.16px;width:92.80px;height:19.52px;">90.7</div>
<div class="c n" style="left:887.70px;top:651.16px;width:92.70px;height:19.52px;">83.7</div>
<div style="left:42.00px;top:670.18px;width:382.00px;height:1.00px;background:#9dcbda"></div>
<div style="left:424.00px;top:670.18px;width:556.40px;height:1.00px;background:#ece5e2"></div>
<div class="c" style="left:42.00px;top:670.68px;width:289.50px;height:19.52px;">Net Profit Margin</div>
<div class="c" style="left:331.50px;top:670.68px;width:92.50px;height:19.52px;">Aug</div>
<div class="c n" style="left:424.00px;top:670.68px;width:92.70px;height:19.52px;">77.6</div>
<div class="c n" style="left:516.70px;top:670.68px;width:92.80px;height:19.52px;">59.7</div>
<div class="c n" style="left:609.50px;top:670.68px;width:92.70px;height:19.52px;">92.3</div>
<div class="c n" style="left:702.20px;top:670.68px;width:92.70px;height:19.52px;">86</div>
<div class="c n" style="left:794.90px;top:670.68px;width:92.80px;height:19.52px;">67.1</div>
<div class="c n" style="left:887.70px;top:670.68px;width:92.70px;height:19.52px;">103.2</div>
<div style="left:42.00px;top:689.70px;width:382.00px;height:1.00px;background:#9dcbda"></div>
<div style="left:424.00px;top:689.70px;width:556.40px;height:1.00px;background:#ece5e2"></div>
<div class="c" style="left:42.00px;top:690.20px;width:289.50px;height:19.52px;">Net Profit Margin</div>
<div class="c" style="left:331.50px;top:690.20px;width:92.50px;height:19.52px;">Sep</div>
<div class="c n" style="left:424.00px;top:690.20px;width:92.70px;height:19.52px;">89</div>
<div class="c n" style="left:516.70px;top:690.20px;width:92.80px;height:19.52px;">89.9</div>
<div class="c n" style="left:609.50px;top:690.20px;width:92.70px;height:19.52px;">96.1</div>
<div class="c n" style="left:702.20px;top:690.20px;width:92.70px;height:19.52px;">86.3</div>
<div class="c n" style="left:794.90px;top:690.20px;width:92.80px;height:19.52px;">77.7</div>
<div class="c n" style="left:887.70px;top:690.20px;width:92.70px;height:19.52px;">69.9</div>
<div style="left:331.00px;top:534.04px;width:1.00px;height:170.46px;background:#9dcbda"></div>
<div style="left:423.50px;top:534.04px;width:1.00px;height:170.46px;background:#9dcbda"></div>
<div style="left:516.20px;top:534.04px;width:1.00px;height:170.46px;background:#ece5e2"></div>
<div style="left:609.00px;top:534.04px;width:1.00px;height:170.46px;background:#ece5e2"></div>
<div style="left:701.70px;top:534.04px;width:1.00px;height:170.46px;background:#ece5e2"></div>
<div style="left:794.40px;top:534.04px;width:1.00px;height:170.46px;background:#ece5e2"></div>
<div style="left:887.20px;top:534.04px;width:1.00px;height:170.46px;background:#ece5e2"></div>
<div style="left:979.90px;top:534.04px;width:1.00px;height:170.46px;background:#ece5e2"></div>
<div style="left:0.00px;top:704.50px;width:990.00px;height:12.00px;background:#f8f9fa"></div>
<div style="left:0.00px;top:704.50px;width:41.30px;height:12.00px;background:#f2f3f4"></div>
<div style="left:0.00px;top:716.00px;width:990.00px;height:1.00px;background:#e6e9f0"></div>
<div style="left:41.30px;top:704.50px;width:1.00px;height:12.00px;background:#d8d8d8"></div>
<div style="left:44.00px;top:706.50px;width:856.00px;height:7.70px;background:#dadce0;border-radius:4px"></div>
<div style="left:0.00px;top:716.50px;width:990.00px;height:3.50px;background:#f9fbfd"></div>
<div style="left:327.00px;top:716.50px;width:109.00px;height:3.50px;background:#e1e9f7"></div>
</div>
</body>
</html>
